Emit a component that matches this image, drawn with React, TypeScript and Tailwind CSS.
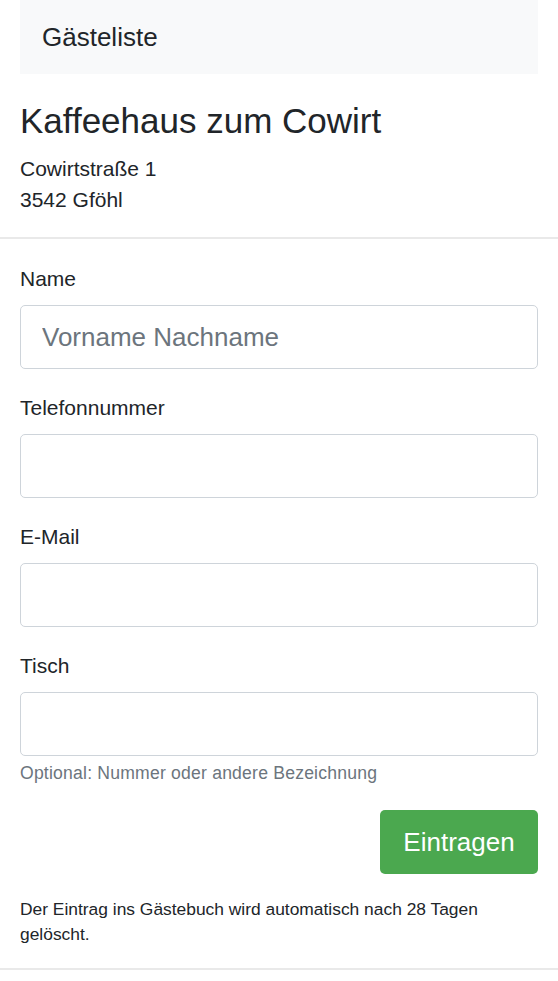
import React from "react";

function Field({ label, placeholder, help, last }: { label: string; placeholder?: string; help?: string; last?: boolean }) {
  return (
    <div className={last ? "" : "mb-[23px]"}>
      <label className="block text-[21px] leading-[31px] mb-[11px]">{label}</label>
      <input
        type="text"
        placeholder={placeholder}
        className="block w-full h-[64px] border border-[#ced4da] rounded-[5px] bg-white px-[21px] text-[26px] text-[#495057] placeholder:text-[#6c757d] outline-none"
        style={{ fontFamily: '"Liberation Sans", Arial, sans-serif' }}
      />
      {help && <div className="mt-[5px] text-[17.6px] leading-[25px] text-[#6c757d] tracking-[0.2px]">{help}</div>}
    </div>
  );
}

export default function App() {
  return (
    <div
      className="bg-white text-[#212529] min-h-[981px]"
      style={{ fontFamily: '"Liberation Sans", Arial, sans-serif' }}
    >
      <div className="mx-[20px] h-[74px] bg-[#f8f9fa] flex items-center px-[22px] text-[26px]">
        Gästeliste
      </div>
      <div className="px-[20px]">
        <h1 className="mt-[26px] text-[35px] leading-[42px] font-normal">Kaffeehaus zum Cowirt</h1>
        <div className="mt-[11px] text-[21px] leading-[31.2px]">
          <div>Cowirtstraße 1</div>
          <div>3542 Gföhl</div>
        </div>
      </div>
      <div className="mt-[22px] border-t-2 border-[#e9e9e9]" />
      <form className="px-[20px] pt-[24px]" onSubmit={(e) => e.preventDefault()}>
        <Field label="Name" placeholder="Vorname Nachname" />
        <Field label="Telefonnummer" />
        <Field label="E-Mail" />
        <Field label="Tisch" help="Optional: Nummer oder andere Bezeichnung" last />
        <div className="flex justify-end mt-[24px]">
          <button
            type="submit"
            className="h-[64px] w-[158px] rounded-[5px] bg-[#4ba84f] text-white text-[26px] flex items-center justify-center"
          >
            Eintragen
          </button>
        </div>
        <p className="mt-[23px] text-[17.4px] leading-[25px]">
          Der Eintrag ins Gästebuch wird automatisch nach 28 Tagen gelöscht.
        </p>
      </form>
      <div className="mt-[21px] border-t-2 border-[#e9e9e9]" />
    </div>
  );
}
